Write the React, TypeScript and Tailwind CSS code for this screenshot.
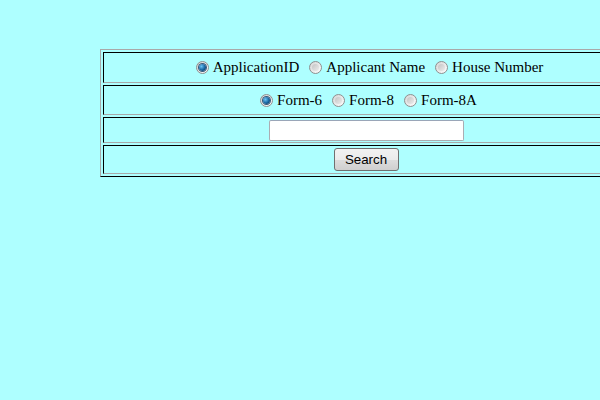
import React from "react";

function Radio({ checked }: { checked?: boolean }) {
  return (
    <span className="relative inline-flex h-[13px] w-[13px] shrink-0 items-center justify-center rounded-full border border-[#8f8f8f] bg-[linear-gradient(135deg,#d4d4d4,#ffffff)]">
      {checked ? (
        <span className="h-[7px] w-[7px] rounded-full bg-[radial-gradient(circle_at_35%_35%,#6cc4f5,#16639e_55%,#0a2f52)] shadow-[0_0_0_1px_#37597a]" />
      ) : (
        <span className="h-[7px] w-[7px] rounded-full bg-[linear-gradient(135deg,#c4c4c4,#ececec)]" />
      )}
    </span>
  );
}

function Option({ label, checked, first }: { label: string; checked?: boolean; first?: boolean }) {
  return (
    <span className={`inline-flex items-center ${first ? "" : "ml-[10px]"}`}>
      <Radio checked={checked} />
      <span className="ml-[4px]">{label}</span>
    </span>
  );
}

const cell =
  "flex items-center justify-center border border-t-black border-l-black border-r-[#a9a9a9] border-b-[#a9a9a9]";

export default function App() {
  return (
    <div className="h-[400px] w-[600px] overflow-hidden bg-[#aeffff] font-['Liberation_Serif',serif] text-[15px] text-black">
      <div className="pl-[100px] pt-[49px]">
        <div className="flex w-[532px] flex-col gap-[2px] border border-t-[#a9a9a9] border-l-[#a9a9a9] border-r-black border-b-black p-[2px]">
          <div className={`${cell} h-[31px] pl-[7px]`}>
            <Option label="ApplicationID" checked first />
            <Option label="Applicant Name" />
            <Option label="House Number" />
          </div>
          <div className={`${cell} h-[30px] pl-[5px]`}>
            <Option label="Form-6" checked first />
            <Option label="Form-8" />
            <Option label="Form-8A" />
          </div>
          <div className={`${cell} h-[26px]`}>
            <input
              type="text"
              className="h-[21px] w-[195px] rounded-[2px] border border-[#abadb3] border-t-[#9aa6b8] bg-white outline-none"
            />
          </div>
          <div className={`${cell} h-[29px]`}>
            <button
              type="button"
              className="h-[23px] w-[65px] rounded-[3px] border border-[#707070] bg-[linear-gradient(#f2f2f2_0%,#ebebeb_50%,#dddddd_51%,#cfcfcf_100%)] font-['Liberation_Sans',Arial,sans-serif] text-[13.33px] text-black"
            >
              Search
            </button>
          </div>
        </div>
      </div>
    </div>
  );
}
